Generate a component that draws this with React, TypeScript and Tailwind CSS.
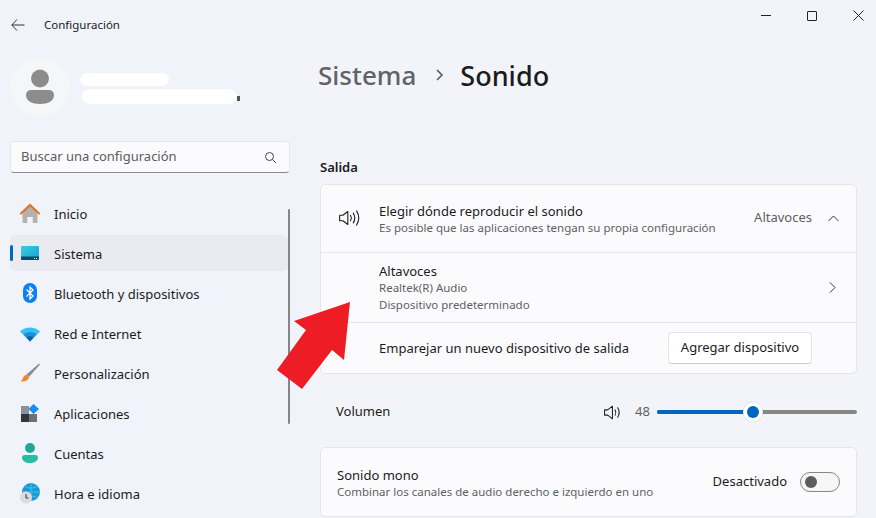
import { ReactNode } from "react";

const font = { fontFamily: '"Noto Sans", "Open Sans", sans-serif' };

function HomeIcon() {
  return (
    <svg width="22" height="22" viewBox="0 0 22 22">
      <path d="M3.500 10.500 11 3.500l7.500 7V20a1 1 0 0 1-1 1h-4v-6h-5v6h-4a1 1 0 0 1-1-1z" fill="#b4b1ae" />
      <path d="M8.500 15h5v6h-5z" fill="#f0f3f9" />
      <path d="M.5 11.500 11 1.500l10.500 10-1.500 1.300L11 4.400 2 12.800z" fill="#e0741c" />
    </svg>
  );
}

function SystemIcon() {
  return (
    <svg width="20" height="16" viewBox="0 0 20 16">
      <defs>
        <linearGradient id="sys" x1="0" y1="0" x2="1" y2="1">
          <stop offset="0" stopColor="#35cfe4" />
          <stop offset="1" stopColor="#1d9fd0" />
        </linearGradient>
      </defs>
      <rect x="1" y="1" width="18" height="14" rx="1" fill="url(#sys)" />
      <path d="M1 11.500h18V14a1 1 0 0 1-1 1H2a1 1 0 0 1-1-1z" fill="#0f4a68" />
      <rect x="14" y="13" width="1" height="1" fill="#cfe" />
      <rect x="16" y="13" width="1" height="1" fill="#cfe" />
    </svg>
  );
}

function BluetoothIcon() {
  return (
    <svg width="18" height="22" viewBox="0 0 18 22">
      <rect x="2" y="1" width="14" height="20" rx="7" fill="#0a80f5" />
      <path d="M5.500 7.500 12 14l-3 3V5l3 3-6.500 6.500" fill="none" stroke="#fff" strokeWidth="1.300" />
    </svg>
  );
}

function WifiIcon() {
  return (
    <svg width="22" height="18" viewBox="0 0 22 18">
      <path d="M1 7.500C6.500 2.300 15.500 2.300 21 7.500L11 17.500z" fill="#38c0f4" />
      <path d="M4.500 10.500c3.600-3.200 9.400-3.200 13 0L11 17.500z" fill="#1a8fdc" />
      <path d="M7.500 13.500c2-1.600 5-1.600 7 0L11 17.500z" fill="#0f5fb0" />
    </svg>
  );
}

function BrushIcon() {
  return (
    <svg width="22" height="22" viewBox="0 0 22 22">
      <path d="M20 1.500 21 2.500 10 15 7.500 12.500z" fill="#8a8f96" />
      <path d="M7.500 12.500 10 15c-.5 3.500-4 5-8.500 4.500C4 18 3.500 14 7.500 12.500z" fill="#f08a24" />
    </svg>
  );
}

function AppsIcon() {
  return (
    <svg width="20" height="20" viewBox="0 0 20 20">
      <rect x="1" y="3" width="8" height="8" fill="#8c9199" />
      <rect x="1" y="11" width="8" height="8" fill="#33373c" />
      <rect x="9" y="11" width="8" height="8" fill="#6d7278" />
      <path d="M13.500 1 19 6l-5.500 5L8.500 6z" fill="#1a8cf0" />
    </svg>
  );
}

function UserIcon() {
  return (
    <svg width="18" height="22" viewBox="0 0 18 22">
      <circle cx="9" cy="6" r="5" fill="#1ea896" />
      <path d="M1 15.500A2.500 2.500 0 0 1 3.500 13h11a2.500 2.500 0 0 1 2.500 2.500c0 3.500-3.500 5.500-8 5.500s-8-2-8-5.500z" fill="#25bfa6" />
    </svg>
  );
}

function GlobeIcon() {
  return (
    <svg width="22" height="22" viewBox="0 0 22 22">
      <circle cx="12" cy="10" r="9" fill="#1a9bd8" />
      <path d="M3 10h18M12 1v18M6 4.500c4 2 8 2 12 0M6 15.500c4-2 8-2 12 0" stroke="#52c8ee" strokeWidth="0.8" fill="none" />
      <circle cx="7" cy="15.500" r="6" fill="#dcdcdc" />
      <path d="M7 12v4h2.500" stroke="#333" strokeWidth="1" fill="none" />
    </svg>
  );
}

const navItems: { label: string; icon: ReactNode; active?: boolean }[] = [
  { label: "Inicio", icon: <HomeIcon /> },
  { label: "Sistema", icon: <SystemIcon />, active: true },
  { label: "Bluetooth y dispositivos", icon: <BluetoothIcon /> },
  { label: "Red e Internet", icon: <WifiIcon /> },
  { label: "Personalización", icon: <BrushIcon /> },
  { label: "Aplicaciones", icon: <AppsIcon /> },
  { label: "Cuentas", icon: <UserIcon /> },
  { label: "Hora e idioma", icon: <GlobeIcon /> },
];

function Speaker({ waves }: { waves: number }) {
  return (
    <svg width={waves > 2 ? 24 : 21} height={waves > 2 ? 20 : 19} viewBox={waves > 2 ? "0 0 22 18" : "0 0 20 18"} fill="none" stroke="#1f1f1f" strokeWidth="1" strokeLinejoin="round" strokeLinecap="round">
      <path d="M1.500 6.500H4.500L9 3v12l-4.500-3.500h-3z" />
      <path d="M11.500 6.500c.9 1.500.9 3.500 0 5" />
      {waves > 1 && <path d="M14 4.500c1.700 2.700 1.700 6.300 0 9" />}
      {waves > 2 && <path d="M17 2.500c2.500 4 2.500 9 0 13" />}
    </svg>
  );
}

export default function App() {
  return (
    <div style={font} className="relative flex h-[518px] w-[876px] overflow-hidden bg-[#f2f4f9] text-[#1b1b1b]">
      {/* sidebar */}
      <aside className="flex w-[300px] shrink-0 flex-col bg-[#f0f3fa]">
        <div className="flex h-[50px] shrink-0 items-center pl-[11px]">
          <svg width="14" height="14" viewBox="0 0 14 14" fill="none" stroke="#333" strokeWidth="1">
            <path d="M13.500 7H.8M6 1.500.8 7 6 12.500" />
          </svg>
          <span className="ml-[19px] text-[11.500px] leading-none">Configuración</span>
        </div>
        <div className="mt-[7px] flex items-center pl-[10px]">
          <div className="flex h-[60px] w-[60px] items-center justify-center rounded-full bg-[#f5f6f8]">
            <svg width="30" height="36" viewBox="0 0 30 36">
              <circle cx="15" cy="9.500" r="9" fill="#8c8c8c" />
              <path d="M1 26a5 5 0 0 1 5-5h18a5 5 0 0 1 5 5c0 6-6 9-14 9S1 32 1 26z" fill="#8c8c8c" />
            </svg>
          </div>
          <div className="ml-[10px] mt-[3px] flex flex-col gap-[3px]">
            <div className="h-[13px] w-[89px] rounded-full bg-white" />
            <div className="ml-[2px] flex items-end">
              <div className="h-[15px] w-[155px] rounded-full bg-white" />
              <div className="mb-[3px] h-[5px] w-[3px] bg-[#555]" />
            </div>
          </div>
        </div>
        <div className="mx-[10px] mt-[24px] flex h-[32px] shrink-0 items-center justify-between rounded-[4px] border border-[#e6e7ea] border-b-[#8b8b8b] bg-[#fbfbfd] pl-[10px] pr-[12px]">
          <span className="text-[13px] text-[#5c5c5c]">Buscar una configuración</span>
          <svg width="13" height="13" viewBox="0 0 13 13" fill="none" stroke="#444" strokeWidth="1">
            <circle cx="5.500" cy="5.500" r="4" />
            <path d="m8.500 8.500 3.500 3.500" />
          </svg>
        </div>
        <div className="relative mt-[22px] flex flex-col gap-[4px] pl-[10px] pr-[12px]">
          {navItems.map((item) => (
            <div key={item.label} className={`relative flex h-[36px] shrink-0 items-center rounded-[5px] ${item.active ? "bg-[#e9ebf0]" : ""}`}>
              {item.active && <div className="absolute left-0 top-[10px] h-[16px] w-[3px] rounded-full bg-[#0067c0]" />}
              <div className="flex w-[40px] shrink-0 justify-center">{item.icon}</div>
              <span className="ml-[4px] pt-[2px] text-[13px] leading-none">{item.label}</span>
            </div>
          ))}
          <div className="absolute right-[10px] top-[14px] h-[215px] w-[2px] rounded-full bg-[#858585]" />
        </div>
      </aside>

      {/* content */}
      <main className="flex min-w-0 flex-1 flex-col">
        <div className="mr-[-5px] flex h-[31px] shrink-0 items-center justify-end">
          <div className="flex w-[46px] justify-center">
            <div className="h-px w-[10px] bg-[#222]" />
          </div>
          <div className="flex w-[46px] justify-center">
            <div className="h-[10px] w-[10px] rounded-[1px] border border-[#222]" />
          </div>
          <div className="flex w-[46px] justify-center">
            <svg width="11" height="11" viewBox="0 0 11 11" stroke="#222" strokeWidth="1">
              <path d="m.5.500 10 10M10.500.500l-10 10" />
            </svg>
          </div>
        </div>
        <div className="mt-[24px] flex h-[40px] shrink-0 items-center pl-[18px] text-[27px] font-medium leading-none">
          <span className="text-[26px] text-[#5f6368]">Sistema</span>
          <svg className="ml-[19px] mr-[16px]" width="9" height="12" viewBox="0 0 9 12" fill="none" stroke="#555" strokeWidth="1.500">
            <path d="m2 1 5 5-5 5" />
          </svg>
          <span>Sonido</span>
        </div>
        <div className="mt-[63px] pl-[20px] text-[13px] font-semibold leading-[18px]">Salida</div>
        <div className="ml-[20px] mr-[19px] mt-[8px] shrink-0 rounded-[5px] border border-[#e5e6ea] bg-[#fbfbfe]">
          <div className="flex h-[68px] items-center border-b border-[#e6e7eb] pb-[1px] pl-[17px] pr-[17px]">
            <Speaker waves={3} />
            <div className="ml-[17px] flex-1">
              <div className="text-[13px] leading-[18px]">Elegir dónde reproducir el sonido</div>
              <div className="text-[11.500px] leading-[15px] text-[#5f5f5f]">Es posible que las aplicaciones tengan su propia configuración</div>
            </div>
            <span className="text-[13px] text-[#5f5f5f]">Altavoces</span>
            <svg className="ml-[16px]" width="11" height="7" viewBox="0 0 11 7" fill="none" stroke="#333" strokeWidth="1">
              <path d="m.5 6 5-5 5 5" />
            </svg>
          </div>
          <div className="flex h-[70px] items-center border-b border-[#e6e7eb] pl-[58px] pr-[20px]">
            <div className="flex-1">
              <div className="text-[13px] leading-[18px]">Altavoces</div>
              <div className="text-[11.500px] leading-[16px] text-[#5f5f5f]">Realtek(R) Audio</div>
              <div className="text-[11.500px] leading-[17px] text-[#5f5f5f]">Dispositivo predeterminado</div>
            </div>
            <svg width="7" height="11" viewBox="0 0 7 11" fill="none" stroke="#333" strokeWidth="1">
              <path d="m1 .5 5 5-5 5" />
            </svg>
          </div>
          <div className="flex h-[50px] items-center pl-[58px] pr-[44px]">
            <span className="flex-1 pt-[2px] text-[13px]">Emparejar un nuevo dispositivo de salida</span>
            <div className="flex h-[32px] w-[144px] items-center justify-center rounded-[4px] border border-[#e5e5e5] border-b-[#cfcfcf] bg-white text-[13px]">
              Agregar dispositivo
            </div>
          </div>
        </div>
        <div className="ml-[36px] mr-[19px] mt-[27px] flex h-[22px] shrink-0 items-center">
          <span className="flex-1 text-[13px]">Volumen</span>
          <Speaker waves={2} />
          <span className="ml-[11px] w-[22px] text-[13px] text-[#5f5f5f]">48</span>
          <div className="relative flex h-[4px] w-[200px] rounded-full bg-[#868686]">
            <div className="h-full w-[96px] rounded-full bg-[#0067c0]" />
            <div className="absolute left-[86px] top-[-8px] flex h-[20px] w-[20px] items-center justify-center rounded-full bg-white shadow-[0_0_1px_rgba(0,0,0,0.3)]">
              <div className="h-[12px] w-[12px] rounded-full bg-[#0067c0]" />
            </div>
          </div>
        </div>
        <div className="ml-[20px] mr-[19px] mt-[24px] flex h-[70px] shrink-0 items-center rounded-[5px] border border-[#e5e6ea] bg-[#fbfbfe] pl-[16px] pr-[16px]">
          <div className="flex-1">
            <div className="text-[13px] leading-[18px]">Sonido mono</div>
            <div className="text-[11.500px] leading-[15px] text-[#5f5f5f]">Combinar los canales de audio derecho e izquierdo en uno</div>
          </div>
          <span className="text-[13px]">Desactivado</span>
          <div className="ml-[13px] flex h-[20px] w-[40px] items-center rounded-full border border-[#858585] bg-[#f6f6f6] pl-[4px]">
            <div className="h-[12px] w-[12px] rounded-full bg-[#5c5c5c]" />
          </div>
        </div>
      </main>

      {/* annotation arrow over the screenshot */}
      <svg className="absolute left-[270px] top-[295px]" width="90" height="100" viewBox="0 0 90 100">
        <path d="M80 7 24 26 36 35 7 75 32 94 62 55 74 65z" fill="#ee1c25" />
      </svg>
    </div>
  );
}
